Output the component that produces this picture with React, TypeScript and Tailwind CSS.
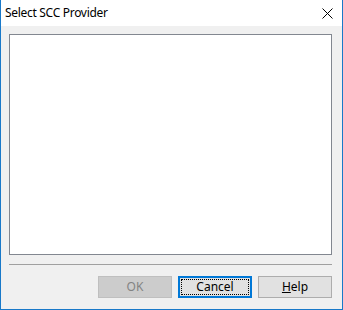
import React from "react";

const font = { fontFamily: '"Noto Sans", "Liberation Sans", sans-serif' };

const SelectProviderDialog: React.FC = () => {
  return (
    <div
      className="w-[343px] h-[310px] flex flex-col bg-[#f0f0f0] border-l border-r border-b border-[#1979c9] text-[12px] text-black"
      style={font}
    >
      {/* title bar */}
      <div className="h-[26px] shrink-0 bg-white flex items-center justify-between pl-[4px] pr-[9px]">
        <span className="leading-none tracking-[-0.3px]">Select SCC Provider</span>
        <svg width="11" height="11" viewBox="0 0 11 11" className="mt-[1px]">
          <path d="M0.5 0.5 L10.5 10.5 M10.5 0.5 L0.5 10.5" stroke="#000" strokeWidth="1" />
        </svg>
      </div>

      {/* body */}
      <div className="flex-1 flex flex-col pl-[8px] pr-[10px] pt-[8px]">
        <div className="h-[221px] bg-white border border-[#828790]" />
        <div className="mt-[9px] h-px bg-[#a0a0a0]" />
        <div className="mt-[11px] flex justify-end gap-[6px]">
          <button
            disabled
            className="w-[74px] h-[22px] bg-[#cccccc] border border-[#bfbfbf] text-[#838383] flex items-center justify-center leading-none"
          >
            OK
          </button>
          <button className="w-[74px] h-[22px] bg-[#e1e1e1] border-2 border-[#0078d7] p-[1px] flex">
            <span className="flex-1 border border-dotted border-black flex items-center justify-center leading-none">
              Cancel
            </span>
          </button>
          <button className="w-[74px] h-[22px] bg-[#e1e1e1] border border-[#adadad] flex items-center justify-center leading-none">
            <span>
              <span className="underline underline-offset-1">H</span>elp
            </span>
          </button>
        </div>
      </div>
    </div>
  );
};

export default function App() {
  return <SelectProviderDialog />;
}
